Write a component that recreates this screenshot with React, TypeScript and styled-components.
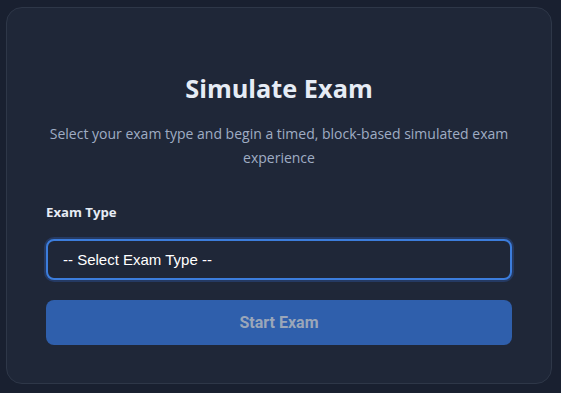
import React from 'react'
import styled, { createGlobalStyle } from 'styled-components'

const GlobalStyle = createGlobalStyle`
  html, body {
    margin: 0;
    background: #192030;
  }
  * {
    box-sizing: border-box;
  }
`

const Page = styled.div`
  padding: 7px 9px 9px 6px;
  min-height: 393px;
`

const Card = styled.div`
  background: #1f2738;
  border: 1px solid #2e3748;
  border-radius: 16px;
  padding: 64px 39px 38px;
  display: flex;
  flex-direction: column;
`

const Title = styled.h1`
  margin: 0;
  text-align: center;
  font-family: 'Open Sans', sans-serif;
  font-weight: 700;
  font-size: 25.3px;
  line-height: 32px;
  color: #e6ecf5;
`

const Subtitle = styled.p`
  margin: 18px 0 0;
  text-align: center;
  font-family: 'Open Sans', sans-serif;
  font-size: 14px;
  line-height: 24px;
  color: #9fadc4;
`

const Field = styled.div`
  margin-top: 32px;
  display: flex;
  flex-direction: column;
`

const Label = styled.label`
  font-family: 'Open Sans', sans-serif;
  font-weight: 700;
  font-size: 13.2px;
  line-height: 20px;
  color: #e6ecf5;
  margin-bottom: 17px;
`

const Select = styled.select`
  appearance: none;
  width: 100%;
  height: 41px;
  padding: 0 15px;
  background: #1f2738;
  border: 2px solid #3c7ddc;
  border-radius: 8px;
  box-shadow: 0 0 0 2px #253a63;
  outline: none;
  font-family: 'Liberation Sans', Arial, sans-serif;
  font-size: 15px;
  color: #ffffff;
`

const Button = styled.button`
  margin-top: 20px;
  height: 45px;
  border: none;
  border-radius: 8px;
  background: #2f5fac;
  font-family: Roboto, sans-serif;
  font-weight: 700;
  font-size: 16px;
  color: #9aa6b9;
  cursor: not-allowed;
`

const App: React.FC = () => {
  return (
    <Page>
      <GlobalStyle />
      <Card>
        <Title>Simulate Exam</Title>
        <Subtitle>
          Select your exam type and begin a timed, block-based simulated exam
          experience
        </Subtitle>
        <Field>
          <Label htmlFor="exam-type">Exam Type</Label>
          <Select id="exam-type" defaultValue="">
            <option value="">-- Select Exam Type --</option>
          </Select>
        </Field>
        <Button disabled>Start Exam</Button>
      </Card>
    </Page>
  )
}

export default App
